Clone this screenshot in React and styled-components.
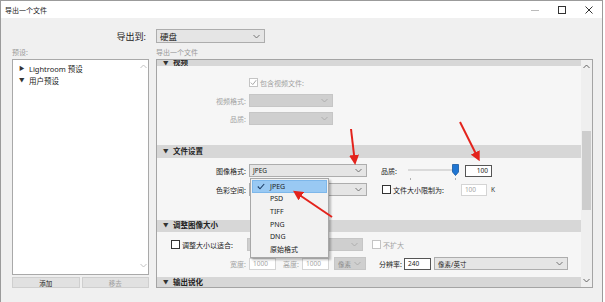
import React from 'react';
import styled, { createGlobalStyle } from 'styled-components';

const Global = createGlobalStyle`
  html, body { margin: 0; padding: 0; background: #fff; }
  * { box-sizing: border-box; }
  body { font-family: "Noto Sans", "Noto Sans CJK SC", sans-serif; }
`;

const Window = styled.div`
  position: relative;
  width: 603px;
  height: 302px;
  background: #f0f0f0;
  border: 1px solid #9b9b9b;
  border-bottom: none;
  display: flex;
  flex-direction: column;
  overflow: hidden;
`;

const TitleBar = styled.div`
  height: 17px;
  background: #fff;
  display: flex;
  align-items: center;
  padding-left: 4px;
  font-size: 7px;
  color: #222;
  flex-shrink: 0;
`;

const Title = styled.div`
  flex: 1;
`;

const WinButton = styled.div`
  width: 27px;
  height: 17px;
  display: flex;
  align-items: center;
  justify-content: center;
`;

const Body = styled.div`
  flex: 1;
  padding: 0 8px 0 11px;
  display: flex;
  flex-direction: column;
`;

const Grid = styled.div`
  display: grid;
  grid-template-columns: 137px 437px;
  column-gap: 7px;
`;

const DestRow = styled(Grid)`
  margin-top: 11px;
  height: 14px;
  align-items: center;
`;

const DestLabel = styled.div`
  text-align: right;
  font-size: 9px;
  color: #222;
  padding-right: 3px;
`;

const Select = styled.div`
  width: ${p => p.$w}px;
  height: ${p => p.$h || 13}px;
  background: ${p => (p.$disabled ? '#cfcfcf' : '#e5e5e5')};
  border: 1px solid ${p => (p.$disabled ? '#c6c6c6' : '#adadad')};
  display: flex;
  align-items: center;
  justify-content: space-between;
  padding: 0 4px 0 3px;
  font-size: ${p => p.$fs || 6.5}px;
  color: ${p => (p.$disabled ? '#8a8a8a' : '#222')};
  position: relative;
  flex-shrink: 0;
`;

const Chevron = ({ color = '#666' }) => (
  <svg width="7" height="5" viewBox="0 0 7 5">
    <path d="M0.5 1 L3.5 4 L6.5 1" fill="none" stroke={color} strokeWidth="0.9" />
  </svg>
);

const CapLabel = styled.div`
  height: 13px;
  margin-top: 3px;
  font-size: 7px;
  color: #9a9a9a;
  line-height: 13px;
`;

const LeftCol = styled.div`
  display: flex;
  flex-direction: column;
`;

const ListBox = styled.div`
  height: 216px;
  background: #fff;
  border: 1px solid #a9a9a9;
  position: relative;
  padding: 2px 0 0 6px;
`;

const TreeItem = styled.div`
  height: 12px;
  display: flex;
  align-items: center;
  gap: 4px;
  font-size: 7.5px;
  color: #222;
`;

const Tri = styled.span`
  font-size: 5.5px;
  color: #333;
  width: 6px;
`;

const ListScroll = styled.div`
  position: absolute;
  top: 0;
  right: 0;
  bottom: 0;
  width: 9px;
  display: flex;
  flex-direction: column;
  justify-content: space-between;
  align-items: center;
  padding: 4px 0 6px;
`;

const ButtonRow = styled.div`
  display: grid;
  grid-template-columns: 1fr 1fr;
  gap: 2px;
  margin-top: 2px;
`;

const Button = styled.div`
  height: 11px;
  background: #e1e1e1;
  border: 1px solid #cfcfcf;
  font-size: 6.5px;
  color: ${p => (p.$disabled ? '#a0a0a0' : '#222')};
  display: flex;
  align-items: center;
  justify-content: center;
`;

const Panel = styled.div`
  height: 229px;
  border: 1px solid #a4a4a4;
  background: #f6f6f6;
  display: flex;
  overflow: hidden;
`;

const Content = styled.div`
  flex: 1;
  overflow: hidden;
  display: flex;
  flex-direction: column;
`;

const Scrollbar = styled.div`
  width: 11px;
  background: #efefef;
  display: flex;
  flex-direction: column;
  align-items: center;
  padding-top: 4px;
`;

const Thumb = styled.div`
  width: 9px;
  height: 79px;
  background: #cdcdcd;
  margin-top: 62px;
`;

const SectionHead = styled.div`
  height: ${p => p.$h || 13}px;
  margin-top: ${p => p.$mt || 0}px;
  background: #d7d7d7;
  display: flex;
  align-items: ${p => (p.$cut ? 'flex-end' : 'center')};
  overflow: hidden;
  padding-left: 6px;
  gap: 4px;
  font-size: 7.5px;
  line-height: 1;
  font-weight: bold;
  color: #222;
  flex-shrink: 0;
`;

const Row = styled.div`
  height: 13px;
  margin-top: ${p => p.$mt || 0}px;
  display: flex;
  align-items: center;
  flex-shrink: 0;
`;

const Label = styled.div`
  width: ${p => p.$w || 89}px;
  text-align: ${p => p.$align || 'right'};
  font-size: 7px;
  color: ${p => (p.$disabled ? '#a3a3a3' : '#222')};
  margin-right: ${p => (p.$gap == null ? 3 : p.$gap)}px;
  margin-left: ${p => p.$ml || 0}px;
  flex-shrink: 0;
  white-space: nowrap;
`;

const Check = styled.div`
  display: flex;
  align-items: center;
  gap: 2px;
  margin-left: ${p => p.$ml || 0}px;
  font-size: 7px;
  color: ${p => (p.$disabled ? '#a3a3a3' : '#222')};
  white-space: nowrap;
`;

const Box = styled.div`
  width: 9px;
  height: 9px;
  border: 1px solid ${p => (p.$disabled ? '#c4c4c4' : '#333')};
  background: #fff;
  display: flex;
  align-items: center;
  justify-content: center;
`;

const Input = styled.div`
  width: ${p => p.$w}px;
  height: ${p => p.$h || 12}px;
  margin-left: ${p => p.$ml || 0}px;
  background: #fff;
  border: 1px solid ${p => (p.$disabled ? '#d4d4d4' : '#555')};
  font-size: 6.5px;
  color: ${p => (p.$disabled ? '#a5a5a5' : '#222')};
  display: flex;
  align-items: center;
  justify-content: ${p => (p.$right ? 'flex-end' : 'flex-start')};
  padding: 0 3px;
  flex-shrink: 0;
`;

const Slider = styled.div`
  position: relative;
  width: 52px;
  height: 13px;
  margin-left: 4px;
  flex-shrink: 0;
`;

const Track = styled.div`
  position: absolute;
  left: 1px;
  right: 2px;
  top: 5px;
  height: 2px;
  background: #dadada;
`;

const Tick = styled.div`
  position: absolute;
  top: 14px;
  width: 1px;
  height: 2px;
  background: #b0b0b0;
`;

const Menu = styled.div`
  position: absolute;
  top: 13px;
  left: 0;
  width: 79px;
  background: #f2f2f2;
  border: 1px solid #a8a8a8;
  box-shadow: 2px 2px 2px rgba(0, 0, 0, 0.25);
  padding: 1px;
  z-index: 5;
`;

const MenuItem = styled.div`
  height: 12.6px;
  display: flex;
  align-items: center;
  padding-left: 17px;
  font-size: 7px;
  color: #222;
  position: relative;
  background: ${p => (p.$active ? '#99c9f3' : 'transparent')};
  border: 1px solid ${p => (p.$active ? '#7db7ea' : 'transparent')};
`;

const CheckMark = styled.span`
  position: absolute;
  left: 4px;
  top: 2px;
`;

const Unit = styled.span`
  font-size: 6.5px;
  color: #333;
  margin-left: 4px;
`;

const Overlay = styled.svg`
  position: absolute;
  left: 0;
  top: 0;
  pointer-events: none;
  z-index: 10;
`;

const formats = ['JPEG', 'PSD', 'TIFF', 'PNG', 'DNG', '原始格式'];

const Arrow = ({ x1, y1, x2, y2 }) => (
  <line x1={x1} y1={y1} x2={x2} y2={y2} stroke="#e3231c" strokeWidth="2" markerEnd="url(#head)" />
);

export default function App() {
  return (
    <>
      <Global />
      <Window>
        <TitleBar>
          <Title>导出一个文件</Title>
          <WinButton>
            <svg width="10" height="10"><path d="M1 5.5 H9" stroke="#bbb" strokeWidth="1" /></svg>
          </WinButton>
          <WinButton>
            <svg width="10" height="10"><rect x="1.5" y="1.5" width="7" height="7" fill="none" stroke="#333" strokeWidth="1" /></svg>
          </WinButton>
          <WinButton>
            <svg width="10" height="10"><path d="M1.5 1.5 L8.5 8.5 M8.5 1.5 L1.5 8.5" stroke="#333" strokeWidth="1" /></svg>
          </WinButton>
        </TitleBar>
        <Body>
          <DestRow>
            <DestLabel>导出到:</DestLabel>
            <Select $w={109} $h={14} $fs={8.5}>
              <span>硬盘</span>
              <Chevron />
            </Select>
          </DestRow>
          <Grid>
            <LeftCol>
              <CapLabel>预设:</CapLabel>
              <ListBox>
                <TreeItem><Tri>▶</Tri>Lightroom 预设</TreeItem>
                <TreeItem><Tri>▼</Tri>用户预设</TreeItem>
                <ListScroll>
                  <svg width="7" height="5"><path d="M0.5 4 L3.5 1 L6.5 4" fill="none" stroke="#bbb" strokeWidth="0.9" /></svg>
                  <svg width="7" height="5"><path d="M0.5 1 L3.5 4 L6.5 1" fill="none" stroke="#bbb" strokeWidth="0.9" /></svg>
                </ListScroll>
              </ListBox>
              <ButtonRow>
                <Button>添加</Button>
                <Button $disabled>移去</Button>
              </ButtonRow>
            </LeftCol>
            <LeftCol>
              <CapLabel>导出一个文件</CapLabel>
              <Panel>
                <Content>
                  <SectionHead $h={6} $cut><Tri>▼</Tri>视频</SectionHead>
                  <Row $mt={10}>
                    <Label />
                    <Check $disabled>
                      <Box $disabled>
                        <svg width="7" height="7"><path d="M0.8 3.6 L2.8 5.6 L6.2 1.2" fill="none" stroke="#a8a8a8" strokeWidth="1" /></svg>
                      </Box>
                      包含视频文件:
                    </Check>
                  </Row>
                  <Row $mt={5}>
                    <Label $disabled>视频格式:</Label>
                    <Select $w={84} $disabled><span /><Chevron color="#aaa" /></Select>
                  </Row>
                  <Row $mt={5}>
                    <Label $disabled>品质:</Label>
                    <Select $w={84} $disabled><span /><Chevron color="#aaa" /></Select>
                  </Row>
                  <SectionHead $mt={20}><Tri>▼</Tri>文件设置</SectionHead>
                  <Row $mt={6}>
                    <Label>图像格式:</Label>
                    <Select $w={118}>
                      <span>JPEG</span>
                      <Chevron />
                      <Menu>
                        {formats.map((f, i) => (
                          <MenuItem key={f} $active={i === 0}>
                            {i === 0 && (
                              <CheckMark>
                                <svg width="8" height="7"><path d="M0.8 3.5 L3 5.8 L7.2 1" fill="none" stroke="#1d3d66" strokeWidth="1.1" /></svg>
                              </CheckMark>
                            )}
                            {f}
                          </MenuItem>
                        ))}
                      </Menu>
                    </Select>
                    <Label $w={22} $ml={14} $gap={0} $align="left">品质:</Label>
                    <Slider>
                      <Track />
                      <svg width="7" height="12" style={{ position: 'absolute', left: 45, top: 0 }}>
                        <path d="M0.5 0.5 H6.5 V8 L3.5 11.5 L0.5 8 Z" fill="#1f76d3" stroke="#17589f" strokeWidth="0.8" />
                      </svg>
                      <Tick style={{ left: 3 }} />
                      <Tick style={{ left: 48 }} />
                    </Slider>
                    <Input $w={27} $ml={6} $right>100</Input>
                  </Row>
                  <Row $mt={6}>
                    <Label>色彩空间:</Label>
                    <Select $w={118}><span /><Chevron /></Select>
                    <Check $ml={15}>
                      <Box />
                      文件大小限制为:
                    </Check>
                    <Input $w={26} $ml={17} $disabled>100</Input>
                    <Unit>K</Unit>
                  </Row>
                  <SectionHead $mt={24} $h={12}><Tri>▼</Tri>调整图像大小</SectionHead>
                  <Row $mt={6}>
                    <Check $ml={14}>
                      <Box />
                      调整大小以适合:
                    </Check>
                    <Select $w={116} $disabled style={{ marginLeft: 14 }}><span /><Chevron color="#aaa" /></Select>
                    <Check $ml={9} $disabled>
                      <Box $disabled />
                      不扩大
                    </Check>
                  </Row>
                  <Row $mt={6}>
                    <Label $disabled>宽度:</Label>
                    <Input $w={27} $disabled>1000</Input>
                    <Label $w={23} $disabled>高度:</Label>
                    <Input $w={27} $disabled>1000</Input>
                    <Select $w={32} $disabled style={{ marginLeft: 5 }}><span>像素</span><Chevron color="#aaa" /></Select>
                    <Label $w={36} $gap={2}>分辨率:</Label>
                    <Input $w={27}>240</Input>
                    <Select $w={134} style={{ marginLeft: 3 }}><span>像素/英寸</span><Chevron /></Select>
                  </Row>
                  <SectionHead $mt={7} $h={12}><Tri>▼</Tri>输出锐化</SectionHead>
                </Content>
                <Scrollbar>
                  <svg width="7" height="5"><path d="M0.5 4 L3.5 1 L6.5 4" fill="none" stroke="#555" strokeWidth="0.9" /></svg>
                  <Thumb />
                  <div style={{ flex: 1 }} />
                  <svg width="7" height="5" style={{ marginBottom: 4 }}><path d="M0.5 1 L3.5 4 L6.5 1" fill="none" stroke="#555" strokeWidth="0.9" /></svg>
                </Scrollbar>
              </Panel>
            </LeftCol>
          </Grid>
        </Body>
        <Overlay width="605" height="302" viewBox="0 0 605 302">
          <defs>
            <marker id="head" markerWidth="5" markerHeight="5" refX="2" refY="2.5" orient="auto" markerUnits="strokeWidth">
              <path d="M0 0 L5 2.5 L0 5 Z" fill="#e3231c" />
            </marker>
          </defs>
          <Arrow x1={350} y1={128} x2={353.5} y2={158} />
          <Arrow x1={459} y1={121} x2={476} y2={155} />
          <Arrow x1={331} y1={216} x2={297} y2={193} />
        </Overlay>
      </Window>
    </>
  );
}
